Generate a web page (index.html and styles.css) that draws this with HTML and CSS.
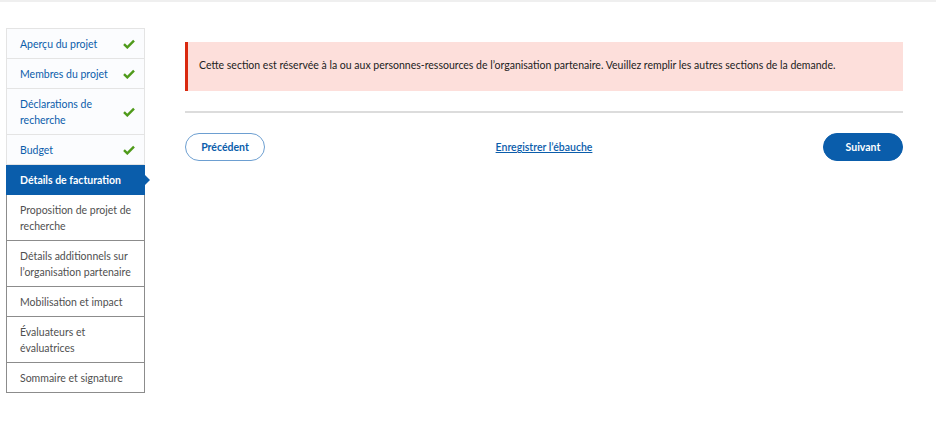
FILE: index.html
```html
<!DOCTYPE html>
<html lang="fr">
<head>
<meta charset="utf-8">
<title>Détails de facturation</title>
<link rel="stylesheet" href="styles.css">
</head>
<body>
<div class="topbar"></div>
<div class="page">
  <nav class="steps">
    <ul>
      <li class="step done"><span>Aperçu du projet</span><svg class="check" viewBox="0 0 12 10" width="12" height="10"><path d="M1 5.2 L4.3 8.4 L11 1.6" fill="none" stroke="#4f9a1a" stroke-width="2.4"/></svg></li>
      <li class="step done"><span>Membres du projet</span><svg class="check" viewBox="0 0 12 10" width="12" height="10"><path d="M1 5.2 L4.3 8.4 L11 1.6" fill="none" stroke="#4f9a1a" stroke-width="2.4"/></svg></li>
      <li class="step done"><span>Déclarations de recherche</span><svg class="check" viewBox="0 0 12 10" width="12" height="10"><path d="M1 5.2 L4.3 8.4 L11 1.6" fill="none" stroke="#4f9a1a" stroke-width="2.4"/></svg></li>
      <li class="step done"><span>Budget</span><svg class="check" viewBox="0 0 12 10" width="12" height="10"><path d="M1 5.2 L4.3 8.4 L11 1.6" fill="none" stroke="#4f9a1a" stroke-width="2.4"/></svg></li>
      <li class="step active"><span>Détails de facturation</span></li>
      <li class="step todo"><span>Proposition de projet de recherche</span></li>
      <li class="step todo"><span>Détails additionnels sur l’organisation partenaire</span></li>
      <li class="step todo"><span>Mobilisation et impact</span></li>
      <li class="step todo"><span>Évaluateurs et évaluatrices</span></li>
      <li class="step todo"><span>Sommaire et signature</span></li>
    </ul>
  </nav>
  <main class="content">
    <div class="alert">Cette section est réservée à la ou aux personnes-ressources de l’organisation partenaire. Veuillez remplir les autres sections de la demande.</div>
    <hr class="sep">
    <div class="actions">
      <button class="btn btn-outline" type="button">Précédent</button>
      <a class="save" href="#">Enregistrer l’ébauche</a>
      <button class="btn btn-primary" type="button">Suivant</button>
    </div>
  </main>
</div>
</body>
</html>
```
FILE: styles.css
```css
* { box-sizing: border-box; }
html, body { margin: 0; padding: 0; background: #fff; }
body {
  font-family: "Lato", "Noto Sans", "Liberation Sans", sans-serif;
  font-size: 10.5px;
  color: #222;
}
.topbar { height: 2px; background: #efefef; }
.page {
  display: flex;
  align-items: flex-start;
  padding: 26px 33px 0 6px;
}
.steps { width: 139px; flex: 0 0 139px; }
.steps ul { list-style: none; margin: 0; padding: 0; }
.step {
  position: relative;
  display: flex;
  align-items: center;
  justify-content: space-between;
  padding: 7px 9px 6px 13px;
  line-height: 16px;
  border: 1px solid #e4e4e4;
  border-top: none;
}
.step:first-child { border-top: 1px solid #e4e4e4; }
.step.done { background: #fbfcfe; color: #0b5dab; }
.step .check { flex: 0 0 auto; margin-left: 6px; }
.step.active {
  background: #0a5dab;
  border-color: #0a5dab;
  color: #fff;
  font-weight: 700;
}
.step.active::after {
  content: "";
  position: absolute;
  right: -6px;
  top: 50%;
  margin-top: -6px;
  border-left: 6px solid #0a5dab;
  border-top: 6px solid transparent;
  border-bottom: 6px solid transparent;
}
.step.todo {
  color: #505050;
  border-color: #8c8c8c;
}
.content {
  flex: 1 1 auto;
  margin-left: 40px;
  padding-top: 14px;
}
.alert {
  background: #fddfdb;
  border-left: 3px solid #d9290f;
  padding: 15px 12px 18px 11px;
  line-height: 16px;
  color: #222;
}
.sep {
  border: none;
  border-top: 2px solid #dcdcdc;
  margin: 20px 0 20px;
}
.actions {
  display: flex;
  align-items: center;
  justify-content: space-between;
}
.btn {
  width: 80px;
  height: 28px;
  border-radius: 14px;
  font-family: inherit;
  font-size: 10.5px;
  font-weight: 700;
  cursor: pointer;
  padding: 0;
}
.btn-outline {
  background: #fff;
  color: #0b5dab;
  border: 1px solid #6d9fd1;
}
.btn-primary {
  background: #0a5dab;
  color: #fff;
  border: 1px solid #0a5dab;
}
.save {
  color: #0b5dab;
  text-decoration: underline;
  font-weight: 600;
}
```
